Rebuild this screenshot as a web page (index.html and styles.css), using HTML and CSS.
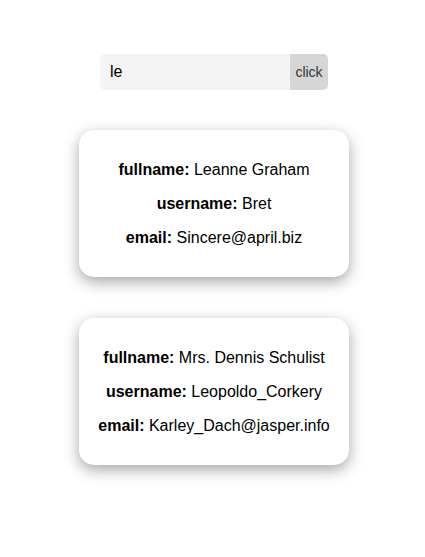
FILE: index.html
```html
<!DOCTYPE html>
<html>
<head>
<meta charset="utf-8">
<link rel="stylesheet" href="styles.css">
</head>
<body>
<div class="app">
  <form class="search">
    <input class="search-input" type="text" value="le">
    <button class="search-btn" type="button">click</button>
  </form>
  <div class="list">
    <div class="card">
      <p><b>fullname:</b> Leanne Graham</p>
      <p><b>username:</b> Bret</p>
      <p><b>email:</b> Sincere@april.biz</p>
    </div>
    <div class="card">
      <p><b>fullname:</b> Mrs. Dennis Schulist</p>
      <p><b>username:</b> Leopoldo_Corkery</p>
      <p><b>email:</b> Karley_Dach@jasper.info</p>
    </div>
  </div>
</div>
</body>
</html>
```
FILE: styles.css
```css
body {
  margin: 0;
  font-family: "Liberation Sans", Arial, sans-serif;
  background: #fff;
  color: #000;
}
.app {
  display: flex;
  flex-direction: column;
  align-items: center;
  padding: 54px 0 60px 3px;
}
.search {
  display: flex;
  margin: 0;
}
.search-input {
  width: 190px;
  height: 36px;
  box-sizing: border-box;
  border: none;
  outline: none;
  background: #f4f4f4;
  padding: 0 10px;
  font-family: "Liberation Sans", Arial, sans-serif;
  font-size: 16px;
  color: #000;
  border-radius: 5px 0 0 5px;
}
.search-btn {
  width: 38px;
  height: 36px;
  border: none;
  background: #d6d6d6;
  color: #333;
  padding: 0;
  font-family: "Liberation Sans", Arial, sans-serif;
  font-size: 14px;
  border-radius: 0 5px 5px 0;
}
.list {
  display: flex;
  flex-direction: column;
  gap: 41px;
  margin-top: 40px;
}
.card {
  width: 270px;
  box-sizing: border-box;
  padding: 15px 0 14px;
  background: #fff;
  border-radius: 15px;
  box-shadow: 0 5px 15px rgba(0, 0, 0, 0.35);
  text-align: center;
  font-size: 16px;
}
.card p {
  margin: 16px 0;
  line-height: 18px;
}
```
